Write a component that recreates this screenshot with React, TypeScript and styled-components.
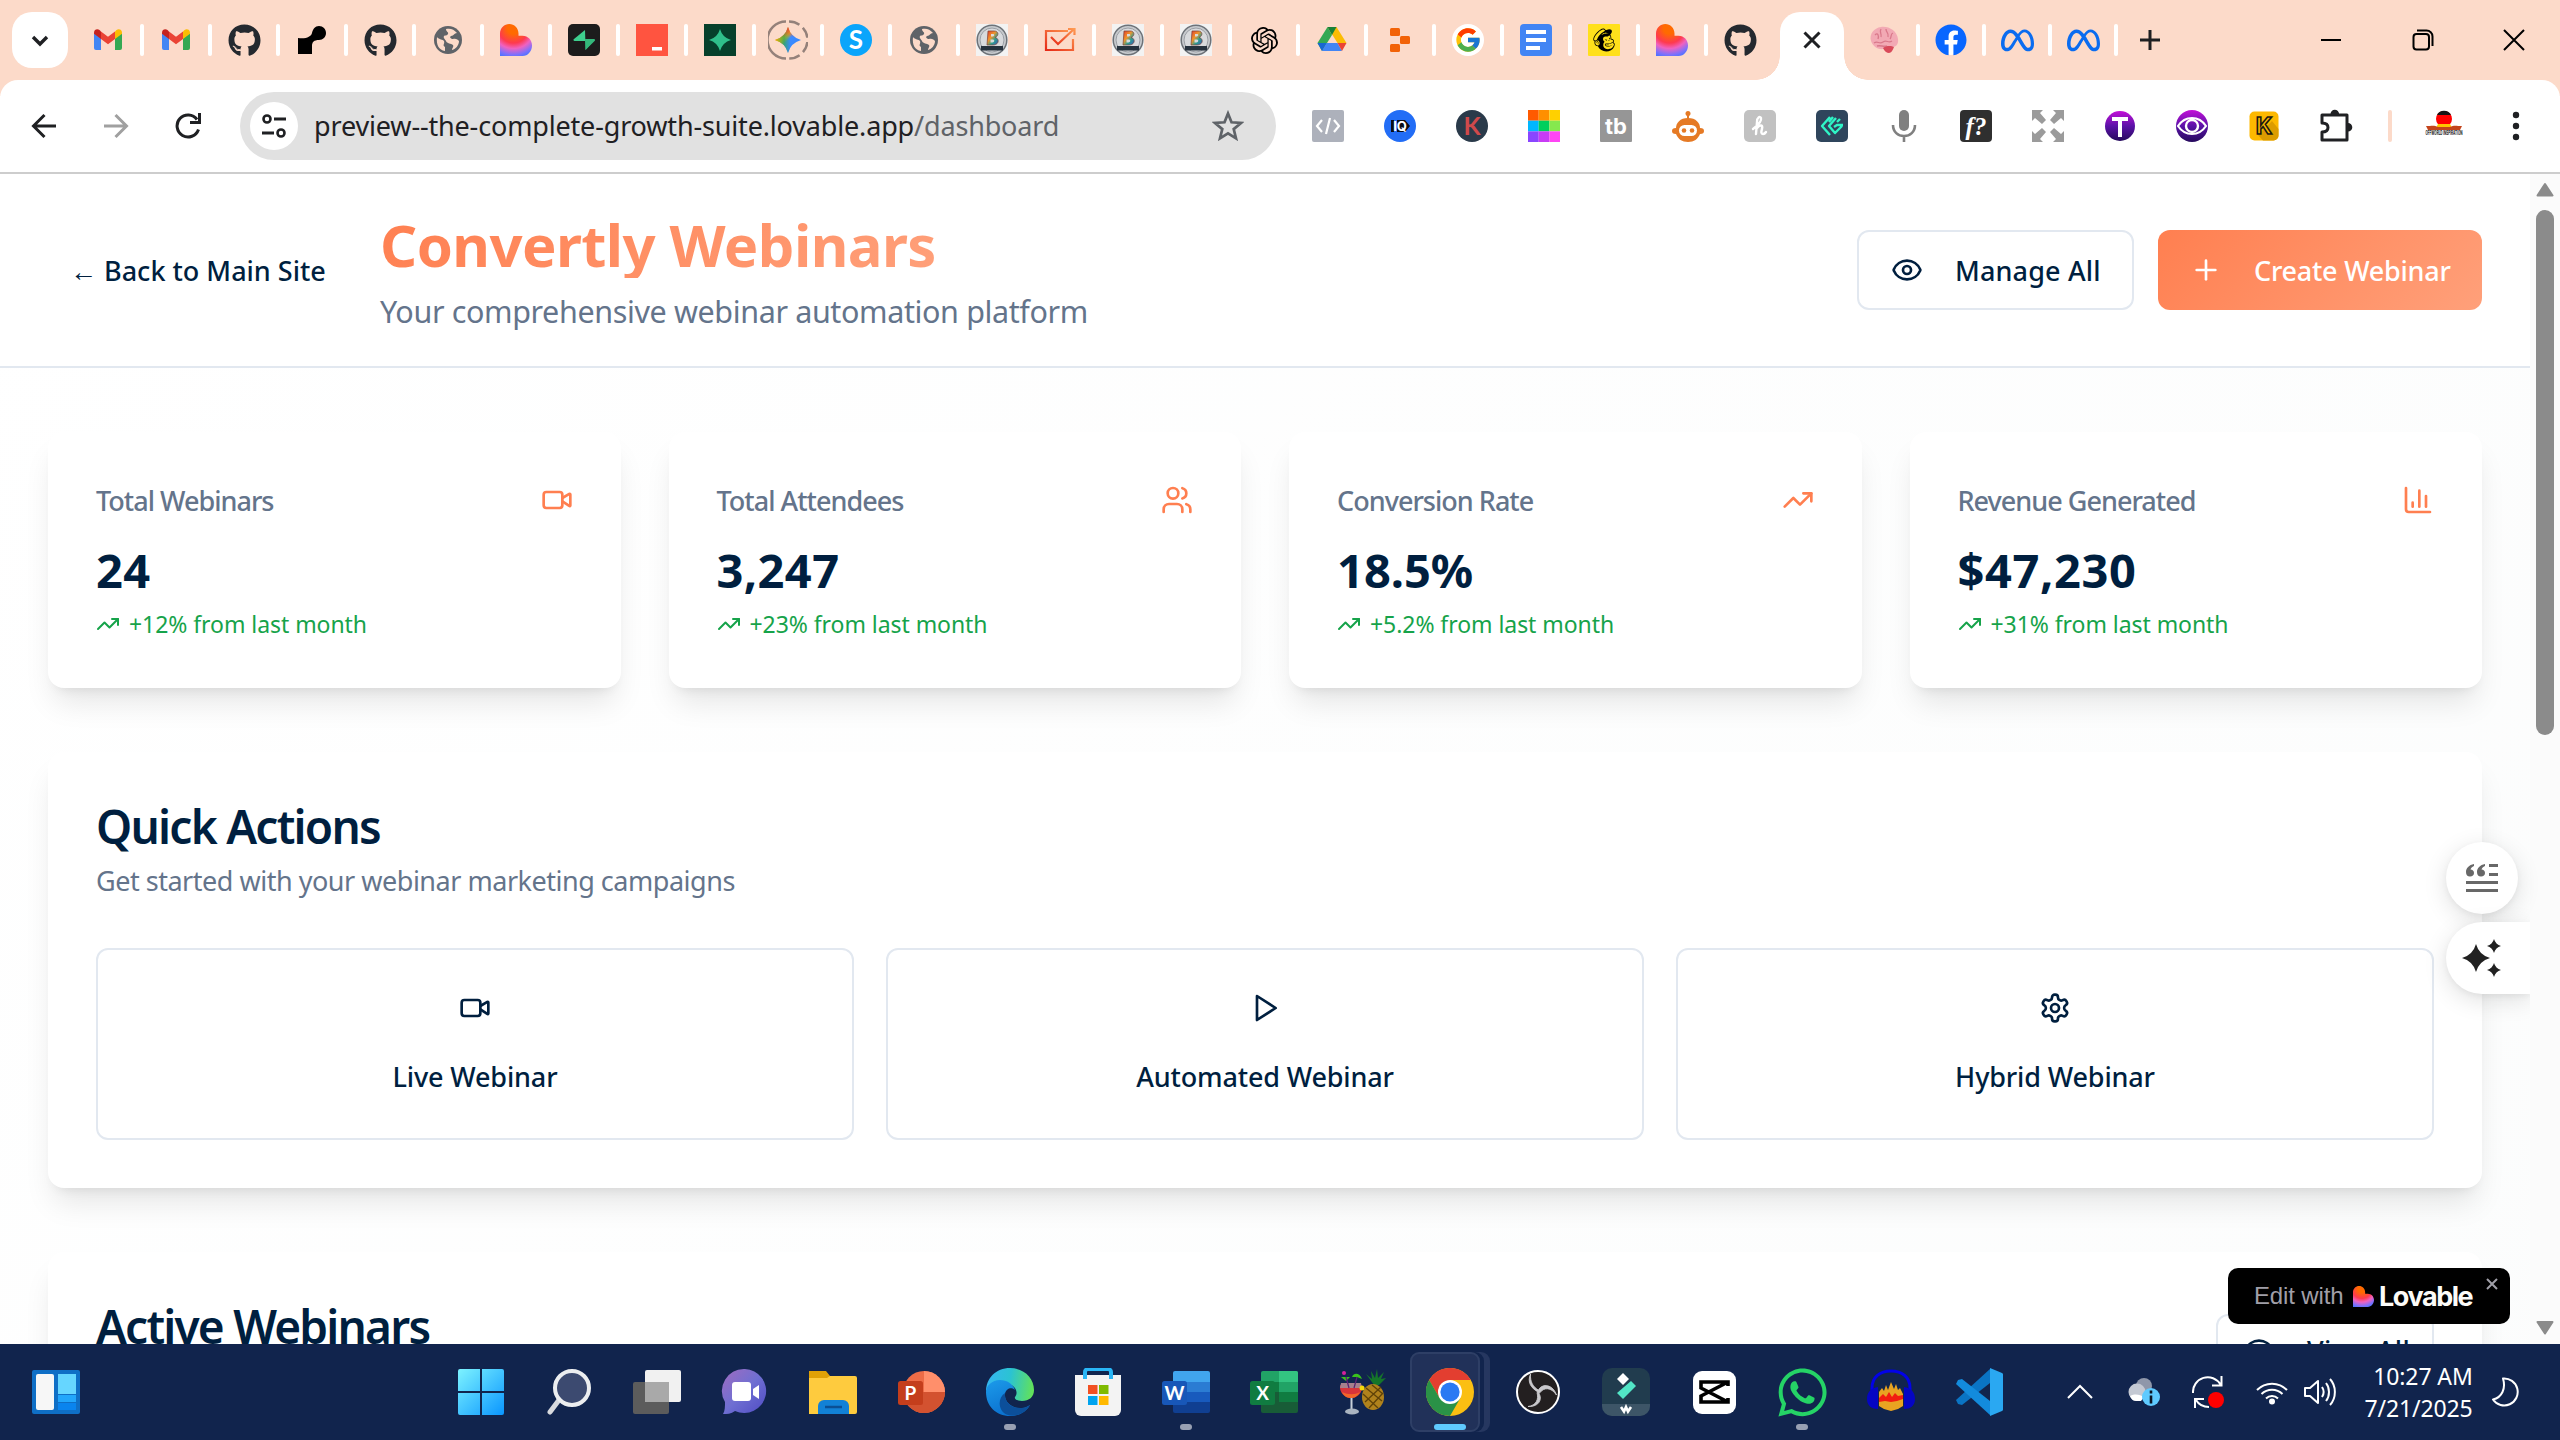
import React from "react";
import styled, { createGlobalStyle, css } from "styled-components";
import { Video, Users, TrendingUp, ChartColumn, Eye, Plus } from "lucide-react";
import { FaGithub, FaFacebook, FaMailchimp, FaWhatsapp } from "react-icons/fa";
import { FaMeta } from "react-icons/fa6";
import { SiOpenai } from "react-icons/si";
import { FcGoogle } from "react-icons/fc";

const ui = `"Noto Sans", "Open Sans", sans-serif`;
const ink = "#001f3f";
const muted = "#64748b";
const line = "#e2e8f0";
const coral = "#ff7f50";
const coralGradient = "linear-gradient(135deg, #ff7f50, #ffa07a)";

const GlobalStyle = createGlobalStyle`
  * { box-sizing: border-box; }
  body { margin: 0; background: #fff; font-family: ${ui}; color: ${ink}; overflow: hidden; }
  h1, h2, p { margin: 0; }
  button { font: inherit; color: inherit; background: none; border: 0; padding: 0; }
  svg { display: block; flex: none; }
`;

const Screen = styled.div`
  width: 2560px;
  height: 1440px;
  display: flex;
  flex-direction: column;
  overflow: hidden;
`;

/* ---------- tab strip ---------- */

const TabStrip = styled.div`
  height: 96px;
  margin-bottom: -16px;
  padding-bottom: 16px;
  flex: none;
  display: flex;
  align-items: stretch;
  background: #fcdac9;
`;

const TabSearch = styled.button`
  width: 56px;
  height: 56px;
  margin: 12px 6px 0 12px;
  border-radius: 20px;
  background: #fff;
  display: flex;
  align-items: center;
  justify-content: center;
`;

const Tab = styled.div<{ $width?: number; $divider?: boolean }>`
  width: ${(p) => p.$width ?? 68}px;
  display: flex;
  align-items: center;
  justify-content: center;
  position: relative;
  ${(p) =>
    p.$divider !== false &&
    css`
      &::after {
        content: "";
        position: absolute;
        right: -2px;
        top: 24px;
        width: 4px;
        height: 32px;
        border-radius: 2px;
        background: #fff;
      }
    `}
`;

const ActiveTab = styled.div`
  width: 64px;
  margin: 12px 6px 0;
  border-radius: 20px 20px 0 0;
  background: #fff;
  display: flex;
  align-items: center;
  justify-content: center;
  padding-bottom: 12px;
  position: relative;
  &::before,
  &::after {
    content: "";
    position: absolute;
    bottom: 0;
    width: 24px;
    height: 24px;
  }
  &::before {
    right: 100%;
    background: radial-gradient(circle at 0 0, transparent 23.5px, #fff 24px);
  }
  &::after {
    left: 100%;
    background: radial-gradient(circle at 100% 0, transparent 23.5px, #fff 24px);
  }
`;

const Spacer = styled.div`
  flex: 1;
`;

const WindowButton = styled.button`
  width: 91.6px;
  display: flex;
  align-items: center;
  justify-content: center;
`;

/* ---------- toolbar ---------- */

const Toolbar = styled.div`
  height: 94px;
  flex: none;
  padding: 0 8px;
  display: flex;
  align-items: center;
  background: #fff;
  border-bottom: 2px solid #cdcdcd;
`;

const ToolbarWrap = styled.div`
  flex: none;
  background: #fff;
  border-radius: 18px 18px 0 0;
  overflow: hidden;
  position: relative;
`;

const ToolCell = styled.div<{ $width?: number }>`
  width: ${(p) => p.$width ?? 72}px;
  display: flex;
  align-items: center;
  justify-content: center;
`;

const AddressBar = styled.div`
  width: 1036px;
  height: 68px;
  margin: 0 16px;
  padding: 0 32px 0 10px;
  border-radius: 34px;
  background: #e1e1e1;
  display: flex;
  align-items: center;
`;

const SiteInfo = styled.div`
  width: 48px;
  height: 48px;
  margin-right: 16px;
  border-radius: 50%;
  background: #fff;
  display: flex;
  align-items: center;
  justify-content: center;
`;

const Url = styled.div`
  flex: 1;
  font-size: 27px;
  letter-spacing: -0.16px;
  line-height: 40px;
  color: #1f2023;
  white-space: nowrap;
  span {
    color: #5f6368;
  }
`;

const ProfileDivider = styled.div`
  width: 4px;
  height: 32px;
  border-radius: 2px;
  background: #fcdac9;
`;

/* ---------- page ---------- */

const Viewport = styled.div`
  flex: 1;
  min-height: 0;
  display: flex;
  overflow: hidden;
  position: relative;
`;

const Page = styled.div`
  width: 2530px;
  height: 2000px;
  background: linear-gradient(135deg, #ffffff 0%, #fbfcfc 100%);
`;

const Header = styled.header`
  height: 194px;
  padding: 32px 48px 32px;
  border-bottom: 2px solid ${line};
  background: #fff;
  display: flex;
  align-items: center;
`;

const BackLink = styled.a`
  margin: 1px 58px 0 22px;
  width: 252px;
  font-size: 27px;
  font-weight: 500;
  line-height: 40px;
  white-space: nowrap;
`;

const Brand = styled.div`
  flex: 1;
`;

const BrandTitle = styled.h1`
  width: max-content;
  height: 72px;
  font-size: 58px;
  font-weight: 700;
  line-height: 77px;
  letter-spacing: -0.6px;
  white-space: nowrap;
  color: transparent;
  background: ${coralGradient};
  background-clip: text;
  -webkit-background-clip: text;
`;

const BrandTagline = styled.p`
  margin-top: 9px;
  height: 47px;
  font-size: 30.5px;
  line-height: 48px;
  letter-spacing: -0.38px;
  color: ${muted};
`;

const HeaderActions = styled.div`
  display: flex;
  gap: 24px;
`;

const HeaderButton = styled.button<{ $primary?: boolean }>`
  height: 80px;
  width: ${(p) => (p.$primary ? 324 : 277)}px;
  padding: 0 0 0 ${(p) => (p.$primary ? 32 : 32)}px;
  border-radius: 12px;
  display: flex;
  align-items: center;
  gap: 32px;
  font-size: 27px;
  font-weight: 500;
  letter-spacing: ${(p) => (p.$primary ? -0.24 : 0.15)}px;
  white-space: nowrap;
  ${(p) =>
    p.$primary
      ? css`
          color: #fff;
          background: ${coralGradient};
        `
      : css`
          border: 2px solid ${line};
          background: #fff;
        `}
`;

const Main = styled.main`
  padding: 64px 48px;
  display: flex;
  flex-direction: column;
  gap: 64px;
`;

const cardSurface = css`
  background: #fff;
  border-radius: 16px;
  box-shadow: 0 20px 30px -6px rgba(0, 0, 0, 0.1), 0 8px 12px -8px rgba(0, 0, 0, 0.1);
`;

const StatGrid = styled.section`
  display: grid;
  grid-template-columns: repeat(4, 1fr);
  gap: 48px;
`;

const StatCard = styled.article`
  ${cardSurface}
  height: 256px;
  padding: 48px;
`;

const StatHead = styled.div`
  height: 40px;
  display: flex;
  align-items: center;
  justify-content: space-between;
  color: ${coral};
`;

const StatLabel = styled.h2`
  margin-top: 2px;
  font-size: 27px;
  font-weight: 500;
  letter-spacing: -0.98px;
  line-height: 40px;
  color: ${muted};
`;

const StatValue = styled.p<{ $tracking: number }>`
  margin-top: 18px;
  height: 70px;
  font-size: 47px;
  font-weight: 700;
  line-height: 64px;
  letter-spacing: ${(p) => p.$tracking}px;
`;

const StatTrend = styled.p`
  height: 32px;
  display: flex;
  align-items: center;
  gap: 9px;
  font-size: 23px;
  line-height: 34px;
  letter-spacing: -0.06px;
  color: #16a34a;
`;

const Panel = styled.section`
  ${cardSurface}
  padding: 48px;
`;

const PanelHead = styled.div`
  display: flex;
  align-items: center;
  justify-content: space-between;
  height: 100px;
`;

const PanelTitles = styled.div`
  padding-top: 2px;
`;

const PanelTitle = styled.h2<{ $tracking: number }>`
  font-size: 46px;
  font-weight: 600;
  line-height: 48px;
  letter-spacing: ${(p) => p.$tracking}px;
`;

const PanelText = styled.p`
  margin-top: 11px;
  font-size: 27px;
  line-height: 40px;
  letter-spacing: -0.48px;
  color: ${muted};
`;

const ActionGrid = styled.div`
  margin-top: 48px;
  display: grid;
  grid-template-columns: repeat(3, 1fr);
  gap: 32px;
`;

const ActionButton = styled.button`
  height: 192px;
  border: 2px solid ${line};
  border-radius: 12px;
  background: #fff;
  display: flex;
  flex-direction: column;
  align-items: center;
  justify-content: center;
  gap: 33px;
  font-size: 27px;
  font-weight: 500;
  line-height: 39px;
  letter-spacing: -0.15px;
`;

const ViewAll = styled.button`
  width: 218px;
  height: 72px;
  padding-left: 25px;
  border: 2px solid ${line};
  border-radius: 12px;
  display: flex;
  align-items: center;
  gap: 32px;
  font-size: 27px;
  font-weight: 500;
  letter-spacing: 0.4px;
  white-space: nowrap;
`;

const Scrollbar = styled.div`
  width: 30px;
  height: 100%;
  padding: 8px 0 8px;
  background: #fbfbfb;
  display: flex;
  flex-direction: column;
  align-items: center;
`;

const ScrollThumb = styled.div`
  width: 18px;
  height: 525px;
  margin: 10px 0 auto;
  border-radius: 9px;
  background: #8b8b8b;
`;

/* ---------- floating controls ---------- */

const FloatDock = styled.div`
  position: absolute;
  top: 668px;
  right: 30px;
  display: flex;
  flex-direction: column;
  align-items: flex-start;
  gap: 8px;
`;

const FloatButton = styled.button<{ $docked?: boolean }>`
  width: ${(p) => (p.$docked ? 84 : 72)}px;
  height: 72px;
  border-radius: ${(p) => (p.$docked ? "36px 0 0 36px" : "36px")};
  background: #fff;
  box-shadow: 0 6px 24px rgba(0, 0, 0, 0.12), 0 2px 6px rgba(0, 0, 0, 0.05);
  display: flex;
  align-items: center;
  padding-left: ${(p) => (p.$docked ? 16 : 20)}px;
  clip-path: ${(p) => (p.$docked ? "inset(-40px 0 -40px -40px)" : "none")};
`;

const LovableBadge = styled.div`
  position: absolute;
  left: 2228px;
  top: 1094px;
  width: 282px;
  height: 56px;
  padding-left: 26px;
  border-radius: 10px;
  background: #000;
  display: flex;
  align-items: center;
  font-family: Inter, "Liberation Sans", sans-serif;
`;

const BadgeText = styled.span`
  width: 99px;
  font: 24px "Liberation Sans", Arial, sans-serif;
  letter-spacing: -0.15px;
  color: #a09fa8;
  white-space: nowrap;
`;

const BadgeName = styled.strong`
  margin-left: 5px;
  font-size: 27px;
  font-weight: 700;
  letter-spacing: -1.45px;
  color: #fcfbf8;
`;

const BadgeClose = styled.span`
  position: absolute;
  right: 12px;
  top: 10px;
`;

/* ---------- taskbar ---------- */

const Taskbar = styled.div`
  height: 96px;
  flex: none;
  background: #11244d;
  display: flex;
  align-items: stretch;
  padding-left: 32px;
  position: relative;
  color: #fff;
`;

const WidgetSlot = styled.div`
  width: 405px;
  display: flex;
  align-items: center;
`;

const AppSlot = styled.div<{ $state?: "open" | "active" }>`
  width: 88.1px;
  display: flex;
  align-items: center;
  justify-content: center;
  position: relative;
  ${(p) =>
    p.$state &&
    css`
      &::after {
        content: "";
        position: absolute;
        bottom: 10px;
        left: calc(50% - ${p.$state === "active" ? 16 : 6}px);
        width: ${p.$state === "active" ? 32 : 12}px;
        height: 6px;
        border-radius: 3px;
        background: ${p.$state === "active" ? "#5fcaff" : "#98a0b3"};
      }
    `}
`;

const ActiveFrame = styled.div`
  position: absolute;
  left: 4px;
  top: 8px;
  width: 70px;
  height: 80px;
  border: 2px solid #2e3f66;
  border-radius: 9px;
  background: #213159;
  box-shadow: 4px 0 0 #11244d, 10px 0 0 #263760;
`;

const AppIcon = styled.div`
  position: relative;
`;

const TrayCell = styled.div<{ $width: number; $before?: number }>`
  width: ${(p) => p.$width}px;
  margin-left: ${(p) => p.$before ?? 0}px;
  display: flex;
  align-items: center;
  justify-content: center;
`;

const Clock = styled.div`
  width: 129px;
  padding-bottom: 1px;
  display: flex;
  flex-direction: column;
  align-items: flex-end;
  justify-content: center;
  font-size: 23px;
  line-height: 32px;
  letter-spacing: -0.1px;
`;

/* ---------- favicons ---------- */

const Ico = ({ size = 32, box = 32, children }: { size?: number; box?: number; children: React.ReactNode }) => (
  <svg width={size} height={size} viewBox={`0 0 ${box} ${box}`} fill="none">
    {children}
  </svg>
);

const Gmail = () => (
  <Ico>
    <path d="M2 9v15a2 2 0 0 0 2 2h5V14z" fill="#4285f4" />
    <path d="M30 9v15a2 2 0 0 1-2 2h-5V14z" fill="#34a853" />
    <path d="M23 7.5V15l7-5.200V8.500c0-3-3.300-4.200-5.500-2.500z" fill="#fbbc04" />
    <path d="M9 15V7.500l7 5.300 7-5.300V15l-7 5.300z" fill="#ea4335" />
    <path d="M2 8.500v1.300L9 15V7.500L7.500 6C5.300 4.300 2 5.500 2 8.500z" fill="#c5221f" />
  </Ico>
);

const Curve = () => (
  <Ico>
    <path d="M2 14c8 1 13-1 14-5 1-4 3-7 7-7s7 3 7 7-3 7-7 7c-5 0-7 2-7 6v8H2z" fill="#000" />
  </Ico>
);

const Globe = () => (
  <Ico>
    <circle cx="16" cy="16" r="14" fill="#5f6368" />
    <path d="M5 13c2 3 6 2 7 4 1 3-2 4 1 6v4C7 26 4 21 5 13zM14 5c4-1 8 0 11 4-3 0-3 3-6 3-2 1 0 3 2 3 3-1 5 1 6 2 0 4-3 8-7 9 0-2 2-3 1-5-2-2-6-1-7-4-1-2-3-3-2-5 1-1 3 0 4-2 1-2-2-2-2-5z" fill="#fcdac9" />
  </Ico>
);

const Heart = ({ id, size = 32 }: { id: string; size?: number }) => (
  <Ico size={size}>
    <defs>
      <radialGradient id={id} cx="0.42" cy="0.12" r="0.95">
        <stop offset="0.2" stopColor="#ff6a00" />
        <stop offset="0.5" stopColor="#fe3a4f" />
        <stop offset="0.68" stopColor="#f062c0" />
        <stop offset="0.88" stopColor="#7f70fb" />
        <stop offset="1" stopColor="#4b73ff" />
      </radialGradient>
    </defs>
    <path d="M0 9.500C0 4 4.300 0 9.300 0s9.200 4 9.200 9.500v2.200h4C28 11.700 32 16 32 21.500S28 32 22.500 32H0z" fill={`url(#${id})`} />
  </Ico>
);

const Supabase = () => (
  <Ico>
    <rect width="32" height="32" rx="5" fill="#1c1c1c" />
    <path d="M17 6v10h9.500L17.500 26V17z" fill="#2cab6f" />
    <path d="M17 6v11H6.500c-1 0-1.300-1-.8-1.700z" fill="#3ecf8e" />
    <path d="M17 15h9c1 0 1.300 1 .8 1.700L17.500 26z" fill="#34b87b" />
  </Ico>
);

const RedTile = () => (
  <Ico>
    <rect width="32" height="32" fill="#ff5440" />
    <rect x="16" y="23" width="10" height="3.500" fill="#fff" />
  </Ico>
);

const star = (cx: number, cy: number, r: number) =>
  `M${cx} ${cy - r}Q${cx + r * 0.22} ${cy - r * 0.22} ${cx + r} ${cy}Q${cx + r * 0.22} ${cy + r * 0.22} ${cx} ${cy + r}Q${cx - r * 0.22} ${cy + r * 0.22} ${cx - r} ${cy}Q${cx - r * 0.22} ${cy - r * 0.22} ${cx} ${cy - r}Z`;

const GreenStar = () => (
  <Ico>
    <rect width="32" height="32" fill="#06402b" />
    <path d={star(16, 16, 11)} fill="#2fbf8a" />
  </Ico>
);

const GeminiLoading = () => (
  <Ico size={40} box={40}>
    <defs>
      <linearGradient id="gem" x1="0" y1="0" x2="1" y2="1">
        <stop offset="0.1" stopColor="#f04438" />
        <stop offset="0.38" stopColor="#fbbc04" />
        <stop offset="0.5" stopColor="#3e8bff" />
        <stop offset="0.85" stopColor="#3186ff" />
      </linearGradient>
      <linearGradient id="gemG" x1="0" y1="0" x2="1" y2="0">
        <stop offset="0" stopColor="#f4b400" />
        <stop offset="0.35" stopColor="#34a853" stopOpacity="0.8" />
        <stop offset="0.6" stopColor="#34a853" stopOpacity="0" />
      </linearGradient>
      <linearGradient id="gemR" x1="0" y1="0" x2="0" y2="1">
        <stop offset="0" stopColor="#ef4136" />
        <stop offset="0.4" stopColor="#ef4136" stopOpacity="0" />
      </linearGradient>
    </defs>
    <path d="M18 38.500A18.500 18.500 0 0 1 18 1.500" stroke="#94817a" strokeWidth="2.500" />
    <path d="M21 1.500A18.500 18.500 0 0 1 21 38.500" stroke="#94817a" strokeWidth="2.500" strokeDasharray="11 4.500" />
    <path d={star(20, 20, 13)} fill="url(#gem)" />
    <path d={star(20, 20, 13)} fill="url(#gemG)" />
    <path d={star(20, 20, 13)} fill="url(#gemR)" />
  </Ico>
);

const Badge = ({ id }: { id: string }) => (
  <Ico>
    <defs>
      <linearGradient id={id} x1="0" y1="0" x2="1" y2="1">
        <stop offset="0" stopColor="#e23b2e" />
        <stop offset="0.4" stopColor="#f0952a" />
        <stop offset="0.65" stopColor="#2f9e8f" />
        <stop offset="1" stopColor="#3758b8" />
      </linearGradient>
    </defs>
    <rect width="32" height="32" fill="#f3f3f3" />
    <circle cx="16" cy="16" r="14.800" fill="#c6c9cd" stroke="#6d7278" strokeWidth="1.500" />
    <circle cx="16" cy="16" r="12" fill="#d8dadd" stroke="#9b9fa5" strokeWidth="1" />
    <path d="M12 7h6c5 0 5 5 1 6.500 5 1 4 7.500-2 7.500h-6z" fill={`url(#${id})`} stroke="#7a4038" strokeWidth="0.700" />
    <path d="M15 10h2c2 0 1.500 2.500-.5 2.500H15zM14.500 15.500h2.500c2 0 1.500 3-.5 3h-2z" fill="#d8dadd" />
    <rect x="5" y="22" width="22" height="4.500" fill="#26323e" />
  </Ico>
);

const CheckBox = () => (
  <Ico>
    <defs>
      <linearGradient id="chk" x1="1" y1="0" x2="0" y2="1">
        <stop offset="0" stopColor="#ff9a52" />
        <stop offset="1" stopColor="#e62a17" />
      </linearGradient>
    </defs>
    <path d="M24 7H2v19h27V15" stroke="url(#chk)" strokeWidth="2.200" />
    <path d="M7 13l7 7L30 5M24 5h6.500v6" stroke="url(#chk)" strokeWidth="2.200" />
  </Ico>
);

const Drive = () => (
  <Ico>
    <path d="M11.500 3h9l10 16h-9z" fill="#fbbc04" />
    <path d="M11.500 3L1.500 19l4.500 8L16 11z" fill="#34a853" />
    <path d="M11.500 3h9L16 11z" fill="#188038" />
    <path d="M10.500 19h11l4.500 8H6z" fill="#4285f4" />
    <path d="M1.500 19h9L6 27z" fill="#1967d2" />
    <path d="M21.500 19h9L26 27z" fill="#ea4335" />
  </Ico>
);

const Replit = () => (
  <Ico>
    <g fill="#f26207">
      <rect x="6" y="4" width="10" height="8" rx="1.500" />
      <rect x="16" y="12" width="10" height="8" rx="1.500" />
      <rect x="6" y="20" width="10" height="8" rx="1.500" />
    </g>
  </Ico>
);

const GoogleRound = () => (
  <Ico>
    <circle cx="16" cy="16" r="16" fill="#fff" />
    <FcGoogle x={2} y={2} size={28} />
  </Ico>
);

const Docs = () => (
  <Ico>
    <rect width="32" height="32" rx="4" fill="#4285f4" />
    <path d="M6 8h20M6 16h20M6 24h14" stroke="#fff" strokeWidth="4" />
  </Ico>
);

const Mailchimp = () => (
  <Ico>
    <rect width="32" height="32" rx="1" fill="#ffe01b" />
    <FaMailchimp x={3} y={3} size={26} color="#000" />
  </Ico>
);

const SkypeIcon = () => (
  <Ico>
    <circle cx="16" cy="16" r="16" fill="#0aa5fb" />
    <text x="16" y="25" fontSize="26" fontWeight="700" textAnchor="middle" fill="#fff" fontFamily="Lato, sans-serif">S</text>
  </Ico>
);

const Brain = () => (
  <Ico>
    <path d="M3 17C1 10 6 4 13 3c8-1 16 4 17 12 1 6-3 8-7 9l-2 4-5-3c-7 1-11-3-13-8z" fill="#f2a9b4" />
    <path d="M7 11c3-3 4 1 3 4M13 5c-2 3 1 5 0 8M18 5c0 4 3 3 2 8M25 9c-3 1-1 4-3 6M6 19c4-3 5 2 9-1s5 2 9-1M9 22c4-1 6 1 10 0" stroke="#d9788a" strokeWidth="1.300" />
    <path d="M15 24c4-3 9-2 11-1-1 3-3 6-5 6s-5-2-6-5z" fill="#d94a5a" />
  </Ico>
);

const MetaIcon = () => <FaMeta size={33} color="#0a6cf0" />;

const FbIcon = () => (
  <Ico>
    <circle cx="16" cy="16" r="15" fill="#fff" />
    <FaFacebook x={0} y={0} size={32} color="#0866ff" />
  </Ico>
);

const GithubIcon = () => <FaGithub size={33} color="#24292f" />;

const tabs: React.ReactNode[] = [
  <Gmail />, <Gmail />, <GithubIcon />, <Curve />, <GithubIcon />, <Globe />, <Heart id="h1" />, <Supabase />,
  <RedTile />, <GreenStar />, <GeminiLoading />, <SkypeIcon />, <Globe />, <Badge id="b1" />, <CheckBox />,
  <Badge id="b2" />, <Badge id="b3" />, <SiOpenai size={27} color="#000" />, <Drive />, <Replit />, <GoogleRound />, <Docs />,
  <Mailchimp />, <Heart id="h2" />, <GithubIcon />,
];

/* ---------- extension icons ---------- */

const tileText = (bg: string, fg: string, label: string, size: number, family: string, rx: number, italic = false) => (
  <Ico>
    <rect width="32" height="32" rx={rx} fill={bg} />
    <text x="16" y={16 + size * 0.36} fontSize={size} fontWeight="700" fontStyle={italic ? "italic" : "normal"} textAnchor="middle" fill={fg} fontFamily={family}>
      {label}
    </text>
  </Ico>
);

const extensions: React.ReactNode[] = [
  <Ico>
    <rect width="32" height="32" rx="2" fill="#adb1bb" />
    <path d="M10 10l-5 6 5 6M22 10l5 6-5 6M18 8l-4 16" stroke="#fff" strokeWidth="2.200" />
  </Ico>,
  <Ico>
    <circle cx="16" cy="16" r="16" fill="#226df6" />
    <path d="M7 10h3v12H7zM13 10h8l5 6-5 6h-8z" fill="#0b0d14" />
    <text x="16" y="21" fontSize="13" fontWeight="700" textAnchor="middle" fill="#fff" fontFamily="Inter, sans-serif">IQ</text>
  </Ico>,
  <Ico>
    <circle cx="16" cy="16" r="16" fill="#2a3a4a" />
    <text x="16" y="25" fontSize="25" textAnchor="middle" fill="#d0494b" fontFamily="Lato, sans-serif" fontWeight="700">K</text>
  </Ico>,
  <Ico>
    {["#ff5a00", "#ff8f00", "#ffd000", "#00b7ff", "#00cf5d", "#86e84e", "#8a46ff", "#c83cf5", "#ff45f5"].map((c, i) => (
      <rect key={c} x={(i % 3) * 10.67} y={Math.floor(i / 3) * 10.67} width="10.7" height="10.7" fill={c} />
    ))}
  </Ico>,
  tileText("#969696", "#fff", "tb", 22, "Inter, sans-serif", 1),
  <Ico>
    <circle cx="16" cy="3.500" r="2.500" fill="#e57a25" />
    <path d="M15 4h2v7h-2z" fill="#e57a25" />
    <path d="M16 8c8 0 12 5 12 10 3 0 4 1 4 3s-1 3-4 3c-2 5-6 8-12 8S6 29 4 24c-3 0-4-1-4-3s1-3 4-3C4 13 8 8 16 8z" fill="#e57a25" />
    <rect x="7" y="15" width="18" height="11" rx="5.500" fill="#fff" />
    <circle cx="12" cy="20.500" r="2.300" fill="#e57a25" />
    <circle cx="20" cy="20.500" r="2.300" fill="#e57a25" />
  </Ico>,
  <Ico>
    <rect width="32" height="32" rx="5" fill="#c1c1c1" />
    <path d="M9 19c4-3 9-7 8-11-1-2-4-1-4 4l-1 12M13 18c3-4 6-3 5 1-1 3-1 5 1 5 1 0 2-.5 3-2" stroke="#fff" strokeWidth="2.400" strokeLinecap="round" />
  </Ico>,
  <Ico>
    <rect width="32" height="32" rx="5" fill="#2f455c" />
    <path d="M14 7l-8 9 8 9M20 8l-7 8 6 7 7-7M27 15h-6l-3 2M17 7l-4 5M24 9l-3 3" stroke="#2ff5c6" strokeWidth="2.400" strokeLinejoin="round" />
  </Ico>,
  <Ico>
    <rect x="11" y="0" width="10" height="21" rx="5" fill="#808080" />
    <path d="M5 15c0 7 5 11 11 11s11-4 11-11M16 26v6" stroke="#808080" strokeWidth="2.600" />
  </Ico>,
  tileText("#2f2f2f", "#fff", "f?", 25, '"Liberation Serif", serif', 4, true),
  <Ico>
    <path d="M0 0h11L8 3l6 7-4 4-7-6-3 3zM32 0H21l3 3-6 7 4 4 7-6 3 3zM0 32h11l-3-3 6-7-4-4-7 6-3-3zM32 32H21l3-3-6-7 4-4 7 6 3-3z" fill="#9b9b9b" />
  </Ico>,
  <Ico>
    <defs>
      <linearGradient id="pt" x1="0" y1="0" x2="0" y2="1">
        <stop offset="0" stopColor="#c40fd8" />
        <stop offset="0.5" stopColor="#5b12a8" />
        <stop offset="1" stopColor="#250a5c" />
      </linearGradient>
    </defs>
    <circle cx="16" cy="16" r="15" fill="url(#pt)" />
    <path d="M8 7h16v4h-6v16h-4V11H8z" fill="#fff" />
  </Ico>,
  <Ico>
    <circle cx="16" cy="16" r="16" fill="url(#pt)" />
    <path d="M2 16c4-6 9-8 14-8s10 2 14 8c-4 6-9 8-14 8S6 22 2 16z" stroke="#fff" strokeWidth="2.200" />
    <circle cx="16" cy="16" r="6" stroke="#fff" strokeWidth="2.400" />
  </Ico>,
  <Ico>
    <rect x="1.500" y="1.500" width="29" height="29" rx="5" fill="#fdb800" />
    <path d="M10 25l14-14 6.500 8v6a5 5 0 0 1-5 5.500H15z" fill="#dc9c00" />
    <text x="16" y="24" fontSize="23" fontWeight="700" textAnchor="middle" fill="#fdb800" stroke="#1d1a10" strokeWidth="1.600" fontFamily="Inter, sans-serif">K</text>
  </Ico>,
  <Ico size={34} box={34}>
    <path d="M3 6h25v25H3v-8c4 0 6-2 6-4.500S7 14 3 14z" stroke="#202124" strokeWidth="3" strokeLinejoin="round" />
    <path d="M11.500 5a4.300 4.300 0 0 1 8.600 0zM29 14a4.300 4.300 0 0 1 0 8.600z" fill="#202124" />
  </Ico>,
];

const Avatar = () => (
  <Ico size={40} box={40}>
    <circle cx="20" cy="13" r="8" fill="#f00" />
    <path d="M13 9a8 8 0 0 1 14 0z" fill="#141414" />
    <path d="M14 18h12l2 4H12z" fill="#ffc400" />
    <path d="M2 20c6 0 8-1 12 1h12c4-2 6-1 12-1l-2 4H4z" fill="#c4451c" />
    <text x="20" y="28.500" fontSize="5.500" fontWeight="700" textAnchor="middle" fill="#111" textLength="37" lengthAdjust="spacingAndGlyphs" fontFamily="Inter, sans-serif">OFFWORLD INSPIRATION</text>
  </Ico>
);

/* ---------- page icons ---------- */

const PlayIcon = () => (
  <svg width="32" height="32" viewBox="0 0 24 24" fill="none" stroke="currentColor" strokeWidth="2" strokeLinecap="round" strokeLinejoin="round">
    <polygon points="6 3 20 12 6 21 6 3" />
  </svg>
);

const GearIcon = () => (
  <svg width="32" height="32" viewBox="0 0 24 24" fill="none" stroke="currentColor" strokeWidth="2" strokeLinecap="round" strokeLinejoin="round">
    <path d="M12.22 2h-.44a2 2 0 0 0-2 2v.18a2 2 0 0 1-1 1.730l-.43.25a2 2 0 0 1-2 0l-.15-.08a2 2 0 0 0-2.730.73l-.22.38a2 2 0 0 0 .73 2.730l.15.1a2 2 0 0 1 1 1.720v.51a2 2 0 0 1-1 1.740l-.15.09a2 2 0 0 0-.73 2.730l.22.38a2 2 0 0 0 2.730.73l.15-.08a2 2 0 0 1 2 0l.43.25a2 2 0 0 1 1 1.730V20a2 2 0 0 0 2 2h.44a2 2 0 0 0 2-2v-.18a2 2 0 0 1 1-1.730l.43-.25a2 2 0 0 1 2 0l.15.08a2 2 0 0 0 2.730-.73l.22-.39a2 2 0 0 0-.73-2.730l-.15-.08a2 2 0 0 1-1-1.740v-.5a2 2 0 0 1 1-1.740l.15-.09a2 2 0 0 0 .73-2.730l-.22-.38a2 2 0 0 0-2.730-.73l-.15.08a2 2 0 0 1-2 0l-.43-.25a2 2 0 0 1-1-1.730V4a2 2 0 0 0-2-2z" />
    <circle cx="12" cy="12" r="3" />
  </svg>
);

const stats = [
  { label: "Total Webinars", value: "24", trend: "+12% from last month", icon: <Video size={32} />, tracking: 0.4 },
  { label: "Total Attendees", value: "3,247", trend: "+23% from last month", icon: <Users size={32} />, tracking: 0.4 },
  { label: "Conversion Rate", value: "18.5%", trend: "+5.2% from last month", icon: <TrendingUp size={32} />, tracking: 0 },
  { label: "Revenue Generated", value: "$47,230", trend: "+31% from last month", icon: <ChartColumn size={32} />, tracking: 0.6 },
];

const actions = [
  { label: "Live Webinar", icon: <Video size={32} /> },
  { label: "Automated Webinar", icon: <PlayIcon /> },
  { label: "Hybrid Webinar", icon: <GearIcon /> },
];

/* ---------- taskbar icons (48px box) ---------- */

const Big = ({ children }: { children: React.ReactNode }) => (
  <Ico size={48} box={48}>
    {children}
  </Ico>
);

const officeTile = (color: string, letter: string) => (
  <>
    <rect x="0" y="13" width="25" height="24" rx="2.500" fill={color} />
    <text x="12.500" y="32" fontSize="19" fontWeight="700" textAnchor="middle" fill="#fff" fontFamily="Lato, sans-serif">{letter}</text>
  </>
);

const apps: { icon: React.ReactNode; state?: "open" | "active" }[] = [
  {
    icon: (
      <Big>
        <defs>
          <linearGradient id="win" x1="0" y1="0" x2="1" y2="1">
            <stop offset="0" stopColor="#7df3ff" />
            <stop offset="1" stopColor="#0a96ff" />
          </linearGradient>
        </defs>
        <path d="M3 1h20v22H1V3a2 2 0 0 1 2-2zM25 1h20a2 2 0 0 1 2 2v20H25zM1 25h22v22H3a2 2 0 0 1-2-2zM25 25h22v20a2 2 0 0 1-2 2H25z" fill="url(#win)" />
      </Big>
    ),
  },
  {
    icon: (
      <Big>
        <path d="M14 32L5 44" stroke="#d8dade" strokeWidth="5" strokeLinecap="round" />
        <circle cx="27" cy="20" r="17" fill="#3c4a70" stroke="#eceef0" strokeWidth="4" />
      </Big>
    ),
  },
  {
    icon: (
      <Big>
        <rect x="12" y="2" width="36" height="32" rx="2" fill="#f1f1f1" />
        <rect x="0" y="14" width="36" height="32" rx="2" fill="#5c5c5c" />
        <path d="M12 14h24v20H12z" fill="#a9a9a9" />
      </Big>
    ),
  },
  {
    icon: (
      <Big>
        <defs>
          <linearGradient id="tm" x1="0" y1="0" x2="1" y2="1">
            <stop offset="0" stopColor="#a06cc0" />
            <stop offset="0.5" stopColor="#6f6fd2" />
            <stop offset="1" stopColor="#4f4bc4" />
          </linearGradient>
        </defs>
        <path d="M24 1a22 22 0 1 1-10 42c-4 3-8 3-12 3 2-3 2-8 2-12A22 22 0 0 1 24 1z" fill="url(#tm)" />
        <rect x="11" y="14" width="19" height="19" rx="3" fill="#fff" />
        <path d="M32 21l6-4v14l-6-4z" fill="#fff" />
      </Big>
    ),
  },
  {
    icon: (
      <Big>
        <path d="M0 3h17l4 5h8v9H0z" fill="#e0a106" />
        <path d="M0 10h18l3-2h25a2 2 0 0 1 2 2v34a2 2 0 0 1-2 2H0z" fill="#fecb3e" />
        <path d="M9 46V38a6 6 0 0 1 6-6h19a6 6 0 0 1 6 6v8z" fill="#1281d6" />
        <path d="M16 39h17" stroke="#0b4f94" strokeWidth="2.500" />
      </Big>
    ),
  },
  {
    icon: (
      <Big>
        <circle cx="26" cy="24" r="21" fill="#ed6c47" />
        <path d="M26 3a21 21 0 0 1 21 21H26z" fill="#ff8f6b" />
        <path d="M5 24h42a21 21 0 0 1-42 0z" fill="#d35230" />
        {officeTile("#c43e1c", "P")}
      </Big>
    ),
  },
  {
    icon: (
      <Big>
        <defs>
          <linearGradient id="ed1" x1="0" y1="0.3" x2="1" y2="0.4">
            <stop offset="0" stopColor="#35b6f2" />
            <stop offset="0.5" stopColor="#2bc3d2" />
            <stop offset="1" stopColor="#62e15a" />
          </linearGradient>
          <linearGradient id="ed2" x1="0" y1="0" x2="0.5" y2="1">
            <stop offset="0" stopColor="#1c9bea" />
            <stop offset="1" stopColor="#0a6fce" />
          </linearGradient>
        </defs>
        <path d="M0 24C0 10 10 0 24 0s24 10 24 22c0 7-5 11-12 11-5 0-8-2-7-4 4-5 0-13-9-13C10 16 1 19 0 24z" fill="url(#ed1)" />
        <path d="M0 24c0-6 6-12 14-12 7 0 13 4 15 10-3-3-9-2-10 4-1 9 8 15 17 14 3 0 6-2 8-3-4 7-11 11-20 11C10 48 0 38 0 24z" fill="url(#ed2)" />
        <path d="M19 25c-1 9 7 16 17 15 3 0 6-2 8-3-5 9-15 12-22 10-10-3-11-17-3-22z" fill="#0c4f9a" />
      </Big>
    ),
    state: "open",
  },
  {
    icon: (
      <Big>
        <path d="M11 10V4a3 3 0 0 1 3-3h20a3 3 0 0 1 3 3v6" stroke="#29b6f6" strokeWidth="4" />
        <path d="M1 7h46v35a6 6 0 0 1-6 6H7a6 6 0 0 1-6-6z" fill="#f3f3f3" />
        <path d="M11 7v4M37 7v4" stroke="#29b6f6" strokeWidth="4" />
        <path d="M14 17h9.500v9H14z" fill="#f25022" />
        <path d="M25 17h9.500v9H25z" fill="#7fba00" />
        <path d="M14 28h9.500v9H14z" fill="#00a4ef" />
        <path d="M25 28h9.500v9H25z" fill="#ffb900" />
      </Big>
    ),
  },
  {
    icon: (
      <Big>
        <path d="M13 3h33a2 2 0 0 1 2 2v9H11V5a2 2 0 0 1 2-2z" fill="#41a5ee" />
        <path d="M11 14h37v10H11z" fill="#2b7cd3" />
        <path d="M11 24h37v10H11z" fill="#185abd" />
        <path d="M11 34h37v9a2 2 0 0 1-2 2H13a2 2 0 0 1-2-2z" fill="#103f91" />
        {officeTile("#1857b8", "W")}
      </Big>
    ),
    state: "open",
  },
  {
    icon: (
      <Big>
        <path d="M13 3h33a2 2 0 0 1 2 2v9H11V5a2 2 0 0 1 2-2z" fill="#21a366" />
        <path d="M29 3h17a2 2 0 0 1 2 2v9H29z" fill="#33c481" />
        <path d="M11 14h37v10H11z" fill="#107c41" />
        <path d="M29 14h19v10H29z" fill="#21a366" />
        <path d="M11 24h37v10H11z" fill="#185c37" />
        <path d="M29 24h19v10H29z" fill="#107c41" />
        <path d="M11 34h37v9a2 2 0 0 1-2 2H13a2 2 0 0 1-2-2z" fill="#185c37" />
        {officeTile("#107c41", "X")}
      </Big>
    ),
  },
  {
    icon: (
      <Big>
        <path d="M36 17L28 6l6 5-1-8 4 7 2-9 1 9 6-6-3 7 5-1-7 7z" fill="#15752a" />
        <ellipse cx="35" cy="29" rx="11" ry="13" fill="#b0821c" />
        <path d="M28 20l16 13M25 26l15 14M34 17l11 9M43 19L27 34M45 25L31 40" stroke="#5f4208" strokeWidth="1.300" />
        <path d="M2 18a11 11 0 0 0 22 2c0-2-1-4-2-5H4z" fill="#d8343a" />
        <path d="M3 15h20l1 5H2z" fill="#a7808c" />
        <path d="M4 24c6 3 13 3 18 0-3 5-6 6-9 6s-7-1-9-6z" fill="#f2662a" />
        <path d="M13.500 30v11" stroke="#c8d0da" strokeWidth="2" />
        <ellipse cx="14" cy="43.500" rx="7" ry="3" fill="#aab4c0" />
        <path d="M14 9c2-5 8-4 10 2l-5-2zM3 9h9l-4 4z" fill="#39c21c" />
        <circle cx="6" cy="5" r="2" fill="#d6219c" />
        <path d="M8 9l3 11M19 9l-3 11" stroke="#5b2470" strokeWidth="1.300" />
        <circle cx="24" cy="20" r="2.500" fill="#f5d90a" />
      </Big>
    ),
  },
  {
    icon: (
      <Big>
        <circle cx="24" cy="24" r="24" fill="#fbbf12" />
        <path d="M3.200 12A24 24 0 0 1 44.800 12H24L13.600 30z" fill="#e33e30" />
        <path d="M3.200 12A24 24 0 0 0 24 48l10.400-18H13.600z" fill="#2a9247" />
        <circle cx="24" cy="24" r="12" fill="#fff" />
        <circle cx="24" cy="24" r="9.600" fill="#2a7af3" />
      </Big>
    ),
    state: "active",
  },
  {
    icon: (
      <Big>
        <circle cx="24" cy="24" r="21" fill="#231f20" stroke="#fff" strokeWidth="2" />
        <path d="M24 24C17 20 13 14 16.500 6 16 14 19 19 25 22.500zM24 24c1-8 14-10 18.500 3C37 19 30 19 25.500 25zM24 24c5 6 2 15-10 14.500 8-1 11-7 9-14z" fill="#c9c8cc" stroke="#c9c8cc" strokeWidth="0.900" />
      </Big>
    ),
  },
  {
    icon: (
      <Big>
        <rect width="48" height="48" rx="10" fill="#213c4e" />
        <path d="M0 36h48v2a10 10 0 0 1-10 10H10A10 10 0 0 1 0 38z" fill="#3d5567" />
        <path d="M21 5l6 6-6 6-6-6z" fill="#fff" />
        <path d="M29 13l5 5-13 13-6-6z" fill="#52e5c6" />
        <path d="M19 39l3 4.500 2-4.500 2 4.500 3-4.500" stroke="#fff" strokeWidth="2.600" />
      </Big>
    ),
  },
  {
    icon: (
      <Big>
        <rect x="3" y="3" width="43" height="43" rx="9" fill="#fff" />
        <path d="M38 18v-4H11v6l27 14M38 30v4H11v-6l27-14" stroke="#000" strokeWidth="3.600" />
      </Big>
    ),
  },
  { icon: <FaWhatsapp size={55} color="#25d366" />, state: "open" },
  {
    icon: (
      <Big>
        <path d="M5 28V20C5 9 13 3 24 3s19 6 19 17v8" stroke="#0202e8" strokeWidth="3" />
        <path d="M12 38V24l3-4 2 3 2-6 2 5 3-8 3 7 2-5 2 6 2-2 3 6v12l-5 3-7 2-7-2z" fill="#e9a321" />
        <path d="M12 30l4-4 3 3 3-5 3 5 3-4 3 3 5-1v4l-6 2-6 1-6-1-6 1z" fill="#f21c10" />
        <path d="M11 19v22C5 41 0 38 0 31s4-11 11-12zM37 19v22c6 0 11-3 11-10s-4-11-11-12z" fill="#0505c4" />
      </Big>
    ),
  },
  {
    icon: (
      <Big>
        <path d="M35 1L1 32l2 4 4 1 28-22z" fill="#0a74c4" />
        <path d="M35 47L1 16l2-4 4-1 28 22z" fill="#138bdc" />
        <path d="M35 0l12 5a2 2 0 0 1 1 2v34a2 2 0 0 1-1 2l-12 5z" fill="#2aa8f2" />
      </Big>
    ),
  },
];

export default function App() {
  return (
    <>
      <GlobalStyle />
      <Screen>
        <TabStrip>
          <TabSearch>
            <Ico size={24} box={24}>
              <path d="M5 8l7 7 7-7" stroke="#1f2023" strokeWidth="3.400" transform="translate(0 1)" />
            </Ico>
          </TabSearch>
          {tabs.map((icon, i) => (
            <Tab key={i} $divider={i < tabs.length - 1}>
              {icon}
            </Tab>
          ))}
          <ActiveTab>
            <Ico size={18} box={18}>
              <path d="M1.500 1.500l15 15M16.500 1.500l-15 15" stroke="#1f2023" strokeWidth="3" />
            </Ico>
          </ActiveTab>
          <Tab><Brain /></Tab>
          <Tab $width={66}><FbIcon /></Tab>
          <Tab $width={66}><MetaIcon /></Tab>
          <Tab $width={66}><MetaIcon /></Tab>
          <Tab $divider={false}>
            <Ico size={22} box={22}>
              <path d="M11 1v20M1 11h20" stroke="#1f2023" strokeWidth="3" />
            </Ico>
          </Tab>
          <Spacer />
          <WindowButton>
            <Ico size={20} box={20}><path d="M0 10h20" stroke="#000" strokeWidth="2" /></Ico>
          </WindowButton>
          <WindowButton>
            <Ico size={22} box={22}>
              <rect x="1.500" y="5" width="15.500" height="15.500" rx="3" stroke="#000" strokeWidth="2" />
              <path d="M5 1.500h9.500a6 6 0 0 1 6 6V17" stroke="#000" strokeWidth="2" />
            </Ico>
          </WindowButton>
          <WindowButton>
            <Ico size={22} box={22}><path d="M1 1l20 20M21 1L1 21" stroke="#000" strokeWidth="2" /></Ico>
          </WindowButton>
        </TabStrip>

        <ToolbarWrap>
          <Toolbar>
            <ToolCell>
              <Ico size={26} box={26}><path d="M25 13H3M13.500 2L2.500 13l11 11" stroke="#1f2023" strokeWidth="3" /></Ico>
            </ToolCell>
            <ToolCell>
              <Ico size={26} box={26}><path d="M1 13h22M12.500 2l11 11-11 11" stroke="#a0a0a0" strokeWidth="3" /></Ico>
            </ToolCell>
            <ToolCell>
              <Ico size={26} box={26}>
                <path d="M23.500 16.500A11 11 0 1 1 22 6.500" stroke="#1f2023" strokeWidth="3" />
                <path d="M24.500 0v9.500H15" stroke="#1f2023" strokeWidth="3" />
              </Ico>
            </ToolCell>
            <AddressBar>
              <SiteInfo>
                <Ico size={26} box={26}>
                  <circle cx="6" cy="6" r="3.500" stroke="#1f2023" strokeWidth="2.600" />
                  <path d="M13 6h12M1 20h12" stroke="#1f2023" strokeWidth="3" />
                  <circle cx="20" cy="20" r="3.500" stroke="#1f2023" strokeWidth="2.600" />
                </Ico>
              </SiteInfo>
              <Url>
                preview--the-complete-growth-suite.lovable.app<span>/dashboard</span>
              </Url>
              <Ico>
                <path d="M16 3.500l3.500 8.800 9.500.7-7.300 6.100 2.300 9.200-8-5-8 5 2.300-9.200L3 13l9.500-.7z" stroke="#5f6368" strokeWidth="2.700" />
              </Ico>
            </AddressBar>
            {extensions.map((icon, i) => (
              <ToolCell key={i}>{icon}</ToolCell>
            ))}
            <ToolCell $width={36}><ProfileDivider /></ToolCell>
            <ToolCell><Avatar /></ToolCell>
            <ToolCell>
              <Ico>
                <g fill="#1f2023">
                  <circle cx="16" cy="5" r="3.200" />
                  <circle cx="16" cy="16" r="3.200" />
                  <circle cx="16" cy="27" r="3.200" />
                </g>
              </Ico>
            </ToolCell>
          </Toolbar>
        </ToolbarWrap>

        <Viewport>
          <Page>
            <Header>
              <BackLink>← Back to Main Site</BackLink>
              <Brand>
                <BrandTitle>Convertly Webinars</BrandTitle>
                <BrandTagline>Your comprehensive webinar automation platform</BrandTagline>
              </Brand>
              <HeaderActions>
                <HeaderButton><Eye size={32} />Manage All</HeaderButton>
                <HeaderButton $primary><Plus size={32} />Create Webinar</HeaderButton>
              </HeaderActions>
            </Header>
            <Main>
              <StatGrid>
                {stats.map((s) => (
                  <StatCard key={s.label}>
                    <StatHead>
                      <StatLabel>{s.label}</StatLabel>
                      {s.icon}
                    </StatHead>
                    <StatValue $tracking={s.tracking}>{s.value}</StatValue>
                    <StatTrend>
                      <TrendingUp size={24} />
                      {s.trend}
                    </StatTrend>
                  </StatCard>
                ))}
              </StatGrid>
              <Panel>
                <PanelHead>
                  <PanelTitles>
                    <PanelTitle $tracking={-1.75}>Quick Actions</PanelTitle>
                    <PanelText>Get started with your webinar marketing campaigns</PanelText>
                  </PanelTitles>
                </PanelHead>
                <ActionGrid>
                  {actions.map((a) => (
                    <ActionButton key={a.label}>
                      {a.icon}
                      {a.label}
                    </ActionButton>
                  ))}
                </ActionGrid>
              </Panel>
              <Panel>
                <PanelHead>
                  <PanelTitles>
                    <PanelTitle $tracking={-1.8}>Active Webinars</PanelTitle>
                    <PanelText>Monitor and manage your webinar campaigns</PanelText>
                  </PanelTitles>
                  <ViewAll><Eye size={32} />View All</ViewAll>
                </PanelHead>
              </Panel>
            </Main>
          </Page>
          <Scrollbar>
            <Ico size={18} box={18}><path d="M9 2l7.500 11.500h-15z" fill="#8b8b8b" stroke="#8b8b8b" strokeWidth="2" strokeLinejoin="round" /></Ico>
            <ScrollThumb />
            <Ico size={18} box={18}><path d="M9 15.500L1.500 4h15z" fill="#8b8b8b" stroke="#8b8b8b" strokeWidth="2" strokeLinejoin="round" /></Ico>
          </Scrollbar>
          <FloatDock>
            <FloatButton>
              <Ico>
                <path d="M8 2C3 3 0 6 0 10c0 3 1.500 4.500 4 4.500S8 13 8 11 6.500 7.500 4.500 7.500C5 6 6 5 8 4zM19 2c-5 1-8 4-8 8 0 3 1.500 4.500 4 4.500s4-1.500 4-3.500-1.500-3.500-3.500-3.500C16 6 17 5 19 4z" fill="#686868" />
                <path d="M23 3.500h9M23 12.500h9M0 20.500h32M0 28.500h32" stroke="#686868" strokeWidth="3.200" />
              </Ico>
            </FloatButton>
            <FloatButton $docked>
              <Ico size={40} box={40}>
                <path d={`${star(14, 20, 14)}${star(32, 8, 7)}${star(32, 32, 7)}`} fill="#212121" />
              </Ico>
            </FloatButton>
          </FloatDock>
          <LovableBadge>
            <BadgeText>Edit with</BadgeText>
            <Heart id="h3" size={21} />
            <BadgeName>Lovable</BadgeName>
            <BadgeClose>
              <Ico size={12} box={12}><path d="M1 1l10 10M11 1L1 11" stroke="#a09fa8" strokeWidth="2" /></Ico>
            </BadgeClose>
          </LovableBadge>
        </Viewport>

        <Taskbar>
          <WidgetSlot>
            <Big>
              <rect x="0" y="2" width="48" height="44" rx="2" fill="#0f6fc6" />
              <rect x="4" y="6" width="18" height="36" rx="2" fill="#f7f7f7" />
              <path d="M26 6h18v20H26z" fill="#66d6ff" />
              <path d="M26 27h18v7H26z" fill="#22a6fb" />
              <path d="M26 35h18v7H26z" fill="#0a84ee" />
            </Big>
          </WidgetSlot>
          {apps.map((a, i) => (
            <AppSlot key={i} $state={a.state}>
              {a.state === "active" && <ActiveFrame />}
              <AppIcon>{a.icon}</AppIcon>
            </AppSlot>
          ))}
          <TrayCell $width={64} $before={25}>
            <Ico size={26} box={26}><path d="M1 19l12-12 12 12" stroke="#fff" strokeWidth="2" /></Ico>
          </TrayCell>
          <TrayCell $width={64}>
            <Ico>
              <circle cx="16" cy="10" r="8" fill="#8f97aa" />
              <circle cx="9" cy="16" r="8.500" fill="#c4c9d3" />
              <path d="M2 20c6-3 10-1 14 1l-3 4H8c-3 0-5-2-6-5z" fill="#fff" />
              <circle cx="23" cy="21" r="9" fill="#5fcaff" />
              <path d="M23 14.500v3M23 19.500v8" stroke="#0b1524" strokeWidth="2.600" />
            </Ico>
          </TrayCell>
          <TrayCell $width={64}>
            <Ico>
              <path d="M1 17A14.800 14.800 0 0 1 28.500 8.500M29.500 0v9.500H20M3 32v-9h9M4 24c3 5 8 7 13 7" stroke="#fff" strokeWidth="2" />
              <circle cx="24" cy="24" r="8" fill="#f00" />
            </Ico>
          </TrayCell>
          <TrayCell $width={48} $before={8}>
            <Ico>
              <path d="M1 14a21 21 0 0 1 30 0M5.500 18a15 15 0 0 1 21 0M10 22.500a8.500 8.500 0 0 1 12 0" stroke="#fff" strokeWidth="2" />
              <circle cx="16" cy="25.500" r="3" fill="#fff" />
            </Ico>
          </TrayCell>
          <TrayCell $width={48}>
            <Ico>
              <path d="M1 12h5l8-7v22l-8-7H1zM18 11c2 3 2 7 0 10M22 7c4 5 4 13 0 18M26 3c6.500 7 6.500 19 0 26" stroke="#fff" strokeWidth="2" strokeLinejoin="round" />
            </Ico>
          </TrayCell>
          <Clock>
            <span>10:27 AM</span>
            <span>7/21/2025</span>
          </Clock>
          <TrayCell $width={64}>
            <Ico size={30} box={30}>
              <path d="M13 1.500A13.500 13.500 0 1 1 3 22.500c9-2 13-11 10-21z" stroke="#fff" strokeWidth="2" strokeLinejoin="round" />
            </Ico>
          </TrayCell>
        </Taskbar>
      </Screen>
    </>
  );
}
